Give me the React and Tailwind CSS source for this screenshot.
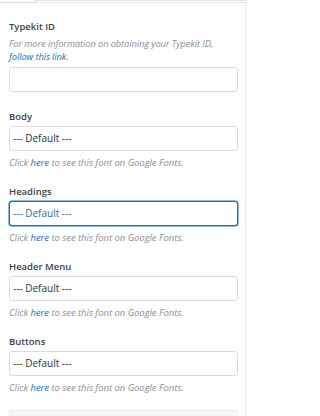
const fontStack = { fontFamily: '"Open Sans", "Noto Sans", sans-serif' }

const Label = ({ children }) => (
  <div className="text-[9.5px] leading-[14px] font-semibold text-[#3c434a]">{children}</div>
)

const Help = () => (
  <p className="mt-[6px] text-[9.5px] leading-[12px] italic text-[#8c8f94] tracking-[-0.05px]">
    Click <a className="text-[#2271b1]">here</a> to see this font on Google Fonts.
  </p>
)

const FontSelect = ({ label, focused }) => (
  <div className="flex flex-col">
    <Label>{label}</Label>
    <div
      className={
        focused
          ? 'mt-[2px] h-[25px] rounded-[3px] border border-[#2271b1] shadow-[0_0_0_0.5px_#2271b1] bg-white flex items-center px-[3px] text-[10px] text-[#2271b1]'
          : 'mt-[2px] h-[25px] rounded-[3px] border border-[#dcdcde] bg-white flex items-center px-[3px] text-[10px] text-[#2c3338]'
      }
    >
      --- Default ---
    </div>
    <Help />
  </div>
)

export default function App() {
  return (
    <div className="w-[247px] h-[416px] overflow-hidden bg-white relative" style={fontStack}>
      <div className="flex h-[3px]">
        <div className="w-[34px] border-b border-[#dcdcde]"></div>
        <div className="flex-1 border-t border-b border-l border-[#e4e4e4]"></div>
      </div>
      <div className="absolute right-[1px] top-0 bottom-0 w-px bg-[#ececec]"></div>

      <div className="pl-[9px] pr-[9px] pt-[17px]">
        <div className="flex flex-col">
          <Label>Typekit ID</Label>
          <p className="mt-[3px] text-[9.3px] leading-[13px] italic text-[#8c8f94] tracking-[-0.1px]">
            For more information on obtaining your Typekit ID,
            <br />
            <a className="text-[#2271b1]">follow this link.</a>
          </p>
          <div className="mt-[4px] h-[25px] rounded-[3px] border border-[#dcdcde] bg-white"></div>
        </div>

        <div className="mt-[18px] flex flex-col gap-[16px]">
          <FontSelect label="Body" />
          <FontSelect label="Headings" focused />
          <FontSelect label="Header Menu" />
          <FontSelect label="Buttons" />
        </div>

        <div className="mt-[16px] h-[20px] rounded-[3px] border border-[#ececec] bg-[#f6f7f7]"></div>
      </div>
    </div>
  )
}
